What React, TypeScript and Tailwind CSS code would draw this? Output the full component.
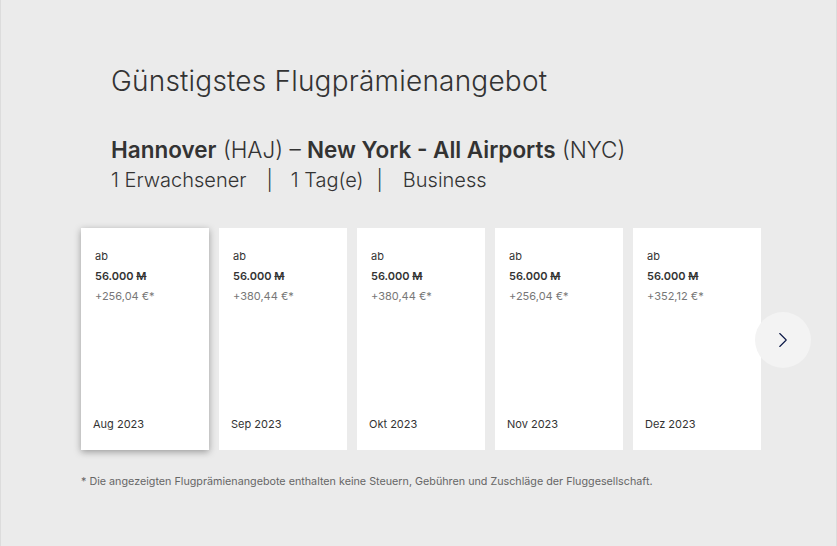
import { ChevronRight } from "lucide-react";

const months = [
  { label: "Aug 2023", price: "+256,04 €*", active: true },
  { label: "Sep 2023", price: "+380,44 €*" },
  { label: "Okt 2023", price: "+380,44 €*" },
  { label: "Nov 2023", price: "+256,04 €*" },
  { label: "Dez 2023", price: "+352,12 €*" },
];

export default function App() {
  return (
    <div
      className="w-[837px] h-[546px] bg-[#ebebeb] border-l border-r border-[#dcdcdc] text-[#333]"
      style={{ fontFamily: "Inter, 'Noto Sans', sans-serif" }}
    >
      <div className="pl-[110px] pt-[63px]">
        <h1 className="text-[28px] leading-[36px] font-light tracking-[0.2px] text-[#333]">
          Günstigstes Flugprämienangebot
        </h1>
        <div className="mt-[36px] text-[22.5px] leading-[30px] text-[#333]">
          <span className="font-semibold">Hannover</span>{" "}
          <span className="font-light">(HAJ) – </span>
          <span className="font-semibold">New York - All Airports</span>{" "}
          <span className="font-light">(NYC)</span>
        </div>
        <div className="flex items-center text-[20px] leading-[30px] font-light text-[#333]">
          <span>1 Erwachsener</span>
          <span className="ml-[20px] mr-[18px]">|</span>
          <span>1 Tag(e)</span>
          <span className="ml-[13px] mr-[20px]">|</span>
          <span>Business</span>
        </div>
      </div>

      <div className="relative mt-[33px] pl-[80px] flex gap-[10px]">
        {months.map((m) => (
          <div
            key={m.label}
            className={
              "w-[128px] h-[222px] bg-white flex flex-col justify-between pt-[21px] pb-[18px] " +
              (m.active ? "shadow-[0_2px_7px_rgba(0,0,0,0.35)]" : "")
            }
          >
            <div className="flex flex-col gap-[5px] pl-[14px] text-[11px] leading-[15px]">
              <span className="text-[#333]">ab</span>
              <span className="font-semibold text-[#333]">
                56.000 <span className="line-through">M</span>
              </span>
              <span className="text-[#777]">{m.price}</span>
            </div>
            <span className="pl-[12px] text-[11px] leading-[15px] text-[#333]">{m.label}</span>
          </div>
        ))}
        <button className="absolute left-[754px] top-[84px] w-[56px] h-[56px] rounded-full bg-[#f3f3f3] flex items-center justify-center">
          <ChevronRight size={26} strokeWidth={1} className="text-[#0a1745]" />
        </button>
      </div>

      <p className="mt-[25px] pl-[80px] text-[10.75px] leading-[14px] text-[#666]">
        * Die angezeigten Flugprämienangebote enthalten keine Steuern, Gebühren und Zuschläge der Fluggesellschaft.
      </p>
    </div>
  );
}
